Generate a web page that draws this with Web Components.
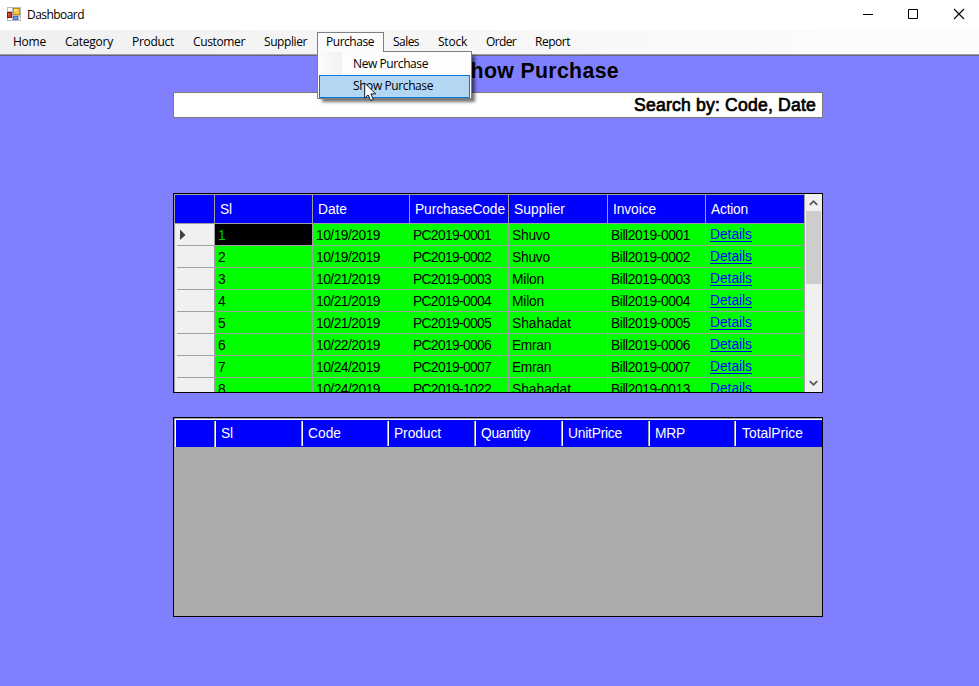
<!DOCTYPE html>
<html lang="en"><head><meta charset="utf-8"><title>Dashboard</title>
<style>html,body{margin:0;height:100%;overflow:hidden;background:#8080ff}</style></head>
<body><app-window></app-window>
<script>
const define = (name, html, setup) => customElements.define(name, class extends HTMLElement {
  connectedCallback() {
    if (this.shadowRoot) return;
    this.attachShadow({mode: 'open'}).innerHTML = html;
    if (setup) setup(this, this.shadowRoot);
  }
});

// Text run whose letter spacing is adjusted to a given advance width.
define('fit-text', `<style>:host{display:inline-block;white-space:pre}span{display:inline-block}</style><span></span>`, (el, root) => {
  const s = root.querySelector('span'), t = el.getAttribute('text'), w = +el.getAttribute('w');
  s.textContent = t;
  if (w) {
    const d = (w - s.getBoundingClientRect().width) / t.length;
    s.style.letterSpacing = d + 'px';
  }
});

define('title-bar', `<style>
:host{display:flex;height:30px;background:#fff;align-items:center;font:12px "Open Sans","Noto Sans",sans-serif;color:#000}
.logo{margin:-2px 6px 0 7px;flex:none}
fit-text{flex:1;margin-top:-1px}
.ctl{flex:none;width:46px;height:30px}
.ctls{display:flex;margin-right:-3px}
</style>
<svg class="logo" width="14" height="14" shape-rendering="crispEdges">
<path d="M0 0h14v14H0z" fill="#b9b9b9"/><path d="M1 1h4v3H1zM1 11h4v2H1zM12 10h1v3h-1z" fill="#fff"/>
<rect x="0" y="5" width="5" height="6" fill="#a01008"/><rect x="1" y="6" width="3" height="4" fill="#cf3a28"/><rect x="1" y="7" width="1" height="1" fill="#f0a090"/>
<rect x="6" y="1" width="7" height="7" fill="#c79000"/><rect x="7" y="2" width="5" height="5" fill="#fbc83a"/><rect x="7" y="2" width="3" height="2" fill="#ffe79a"/>
<rect x="6" y="9" width="5" height="4" fill="#3c70d0"/><rect x="7" y="10" width="3" height="2" fill="#6ea4f6"/></svg>
<fit-text text="Dashboard" w="57"></fit-text>
<div class="ctls">
<svg class="ctl" viewBox="0 0 46 30"><path d="M19 14.5h10" stroke="#000"/></svg>
<svg class="ctl" viewBox="0 0 46 30"><path d="M18.5 9.5h9v9h-9z" stroke="#000" fill="none"/></svg>
<svg class="ctl" viewBox="0 0 46 30"><path d="M18 9l10 10M28 9L18 19" stroke="#000" stroke-width="1.1"/></svg></div>`);

define('menu-item', `<style>
:host{display:block;box-sizing:border-box;height:20px;line-height:19px;padding:0 9px 0 10px;flex:none}
:host([open]){position:relative;z-index:5;padding:0 9px 0 8px;margin:0 -1px 0 1px;background:#fcfcfc;border:solid #808080;border-width:1px 1px 0;line-height:18px}
</style><slot></slot>`);

define('drop-option', `<style>
:host{display:block;box-sizing:border-box;height:23px;line-height:23px;padding-left:34px}
:host([active]){background:#b3d7f3;border:1px solid #0078d7;line-height:20px;padding-left:33px}
</style><slot></slot>`);

define('drop-menu', `<style>
:host{position:absolute;z-index:4;left:-1px;top:18px;box-sizing:border-box;width:155px;height:48px;border:1px solid #808080;padding:0 1px 0 1px;
background:linear-gradient(90deg,transparent 0 24px,#fdfdfd 24px),linear-gradient(90deg,#fcfcfc,#f1f1f1 24px);box-shadow:4px 4px 3px -1px rgba(0,0,0,.55)}
.gap{position:absolute;top:-1px;left:0;width:65px;height:1px;background:#fcfcfc}
svg{position:absolute;left:46px;top:30px;z-index:3}
</style><div class="gap"></div><slot></slot>
<svg width="14" height="20"><path d="M.7 1v15.2l3.4-3.3 2.5 5.7 2.8-1.2-2.5-5.5h4.8z" fill="#fff" stroke="#10182c"/></svg>`);

define('menu-bar', `<style>
:host{display:flex;box-sizing:border-box;height:26px;padding:2px 0 0 3px;font:12px/19px "Open Sans","Noto Sans",sans-serif;color:#000;
background:linear-gradient(#a09ca0,#a09ca0) 0 24px/100% 1px no-repeat,linear-gradient(#686480,#686480) 0 25px/100% 1px no-repeat,linear-gradient(90deg,#f0f0f0,#fcfcfc 88%)}
</style><slot></slot>`, el => {
  const items = [['Home',33],['Category',48],['Product',42],['Customer',52],['Supplier',43],['Purchase',48],['Sales',26],['Stock',29],['Order',30],['Report',35]];
  el.innerHTML = items.map(([t,w]) => `<menu-item${t === 'Purchase' ? ' open' : ''}><fit-text text="${t}" w="${w}"></fit-text>${t === 'Purchase' ?
    `<drop-menu><drop-option><fit-text text="New Purchase" w="75"></fit-text></drop-option><drop-option active><fit-text text="Show Purchase" w="80"></fit-text></drop-option></drop-menu>` : ''}</menu-item>`).join('');
});

define('search-field', `<style>
:host{display:block;box-sizing:border-box;width:650px;height:26px;border:1px solid #7a7a7a;background:#fff;padding-right:6px;text-align:right;font:17.6px/25px "Liberation Sans",Arial,sans-serif;color:#000;-webkit-text-stroke:.7px #000}
</style><slot></slot>`);

define('scroll-bar', `<style>
:host{display:flex;flex-direction:column;width:17px;background:#f0f0f0}
.thumb{height:73px;margin:0 1px;background:#cdcdcd}.sp{flex:1}svg{display:block;width:17px;height:17px}
</style><svg><path d="M4.8 10.8L8.5 7.2l3.7 3.6" fill="none" stroke="#555" stroke-width="1.8"/></svg><div class="thumb"></div><div class="sp"></div>
<svg><path d="M4.8 6.2l3.7 3.6 3.7-3.6" fill="none" stroke="#555" stroke-width="1.8"/></svg>`);

define('purchase-grid', `<style>
:host{display:flex;box-sizing:border-box;width:650px;height:200px;border:1px solid #000;overflow:hidden;font:13.8px/21px "Liberation Sans",Arial,sans-serif;color:#000}
.t{width:631px;flex:none;overflow:hidden;height:198px}
.r{display:grid;grid-template-columns:41px 98px 97px 99px 99px 98px 99px;height:22px}
.r>div{box-sizing:border-box;border-right:1px solid #a0a0a0;border-bottom:1px solid #a0a0a0;background:#0f0;padding:1px 0 0 3px;white-space:nowrap;overflow:hidden}
.h{height:30px;line-height:28px}
.h>div{background:#00f;color:#fff;border-top:1px solid #a0a0a0;padding:1px 0 0 5px}
.h>div:first-child,.r>div:first-child{border-left:1px solid #a0a0a0}
.r:not(.h)>div:first-child{background:linear-gradient(#a0a0a0,#a0a0a0) 2px 21px/37px 1px no-repeat,#f0f0f0;border-bottom:0;padding:0}
.r.sel>div:nth-child(2){background:#000;color:#0c0}
.r:not(.h)>div:last-child{padding:0 0 0 4px}
a{display:inline-block;height:16px;line-height:17px;margin-top:1px;color:#00f;box-shadow:inset 0 -1px #00f}
svg{display:block}
scroll-bar{flex:none}
</style><div class="t"></div><scroll-bar></scroll-bar>`, (el, root) => {
  const f = (t, w) => `<div><fit-text text="${t}" w="${w}"></fit-text></div>`;
  const rows = [['10/19/2019','0001','Shuvo',38,'0001'],['10/19/2019','0002','Shuvo',38,'0002'],['10/21/2019','0003','Milon',32,'0003'],['10/21/2019','0004','Milon',32,'0004'],['10/21/2019','0005','Shahadat',59,'0005'],['10/22/2019','0006','Emran',39,'0006'],['10/24/2019','0007','Emran',39,'0007'],['10/24/2019','1022','Shahadat',59,'0013']];
  root.querySelector('.t').innerHTML = `<div class="r h"><div></div>${f('Sl',12)}${f('Date',29)}${f('PurchaseCode',90)}${f('Supplier',51)}${f('Invoice',43)}${f('Action',37)}</div>` +
    rows.map((r, i) => `<div class="r${i ? '' : ' sel'}"><div>${i ? '' : '<svg width="16" height="20"><path d="M5 5.5l5.5 5.5L5 16z" fill="#404040"/></svg>'}</div>${f(i + 1, 8)}${f(r[0],64)}${f('PC2019-' + r[1],78)}${f(r[2],r[3])}${f('Bill2019-' + r[4],79)}<div><a><fit-text text="Details" w="42"></fit-text></a></div></div>`).join('');
});

define('detail-grid', `<style>
:host{display:block;box-sizing:border-box;width:650px;height:200px;border:1px solid #000;background:#ababab;font:13.8px/27px "Liberation Sans",Arial,sans-serif;color:#fff}
.h{display:grid;box-sizing:border-box;grid-template-columns:39px 87px 86px 87px 87px 87px 86px 87px;height:29px;border-left:1px solid #a0a0a0;border-top:1px solid #a0a0a0;
box-shadow:inset 0 1px #fff;padding-top:1px;background:#00f}
.h>div{box-sizing:border-box;padding-left:7px;white-space:nowrap;background:linear-gradient(90deg,#a0a0a0 1px,#fff 1px) 0 1px/2px 25px no-repeat}
.h>div:first-child{background:linear-gradient(#fff,#fff) 0 0/1px 100% no-repeat}
.h>div:nth-child(2){background-size:2px 100%}
.h>div:last-child{padding-left:8px}
</style><div class="h"><div></div></div>`, (el, root) => {
  root.querySelector('.h').innerHTML += [['Sl',12],['Code',33],['Product',47],['Quantity',49],['UnitPrice',54],['MRP',30],['TotalPrice',61]].map(([t,w]) => `<div><fit-text text="${t}" w="${w}"></fit-text></div>`).join('');
});

define('app-window', `<style>
:host{display:block;width:979px;height:686px;background:#8080ff;overflow:hidden}
main{display:flex;flex-direction:column;width:650px;margin-left:173px}
h1{margin:0;height:36px;text-align:right;padding-right:204px;font:bold 21.33px/31px "Liberation Sans",Arial,sans-serif;color:#000}
purchase-grid{margin-top:75px}detail-grid{margin-top:24px}
</style><title-bar></title-bar><menu-bar></menu-bar>
<main><h1><fit-text text="Show Purchase" w="163"></fit-text></h1>
<search-field><fit-text text="Search by: Code, Date" w="182"></fit-text></search-field>
<purchase-grid></purchase-grid><detail-grid></detail-grid></main>`);
</script></body></html>
